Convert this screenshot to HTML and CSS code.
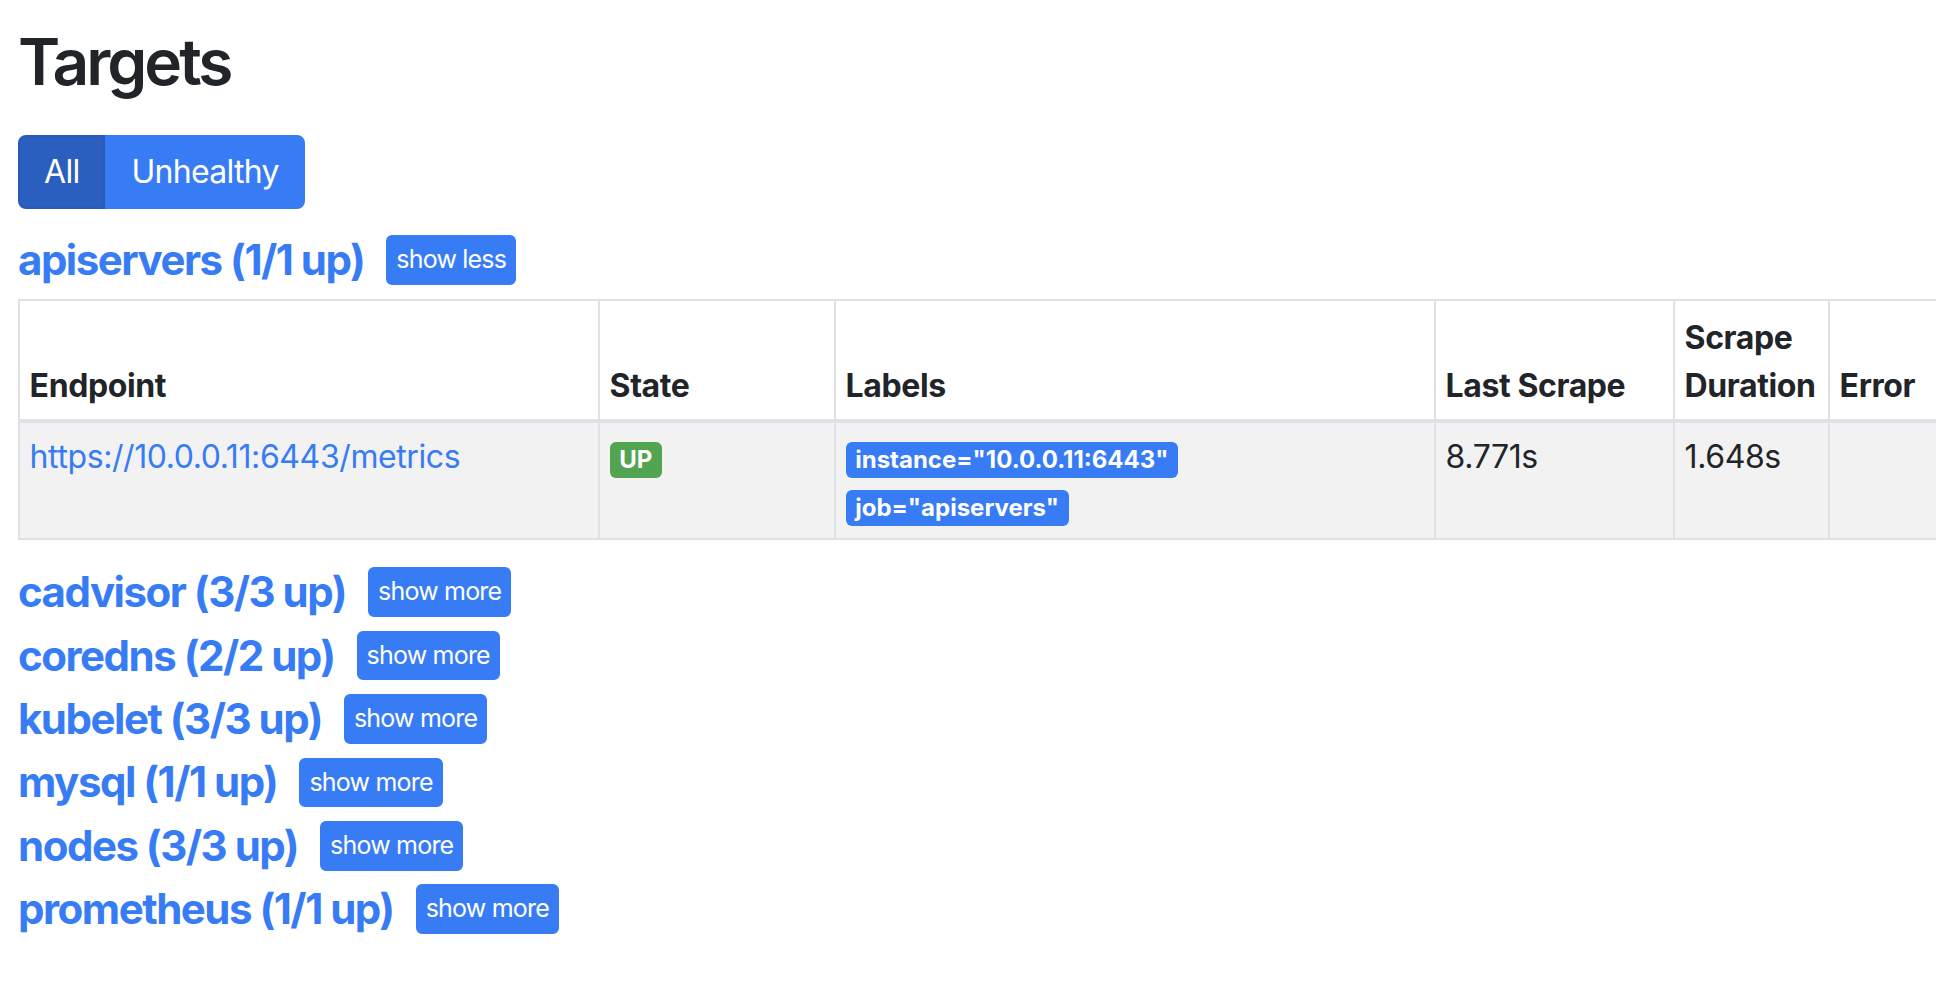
FILE: index.html
```html
<!DOCTYPE html>
<html lang="en">
<head>
    <meta charset="UTF-8">
    <meta name="viewport" content="width=device-width, initial-scale=1.0">
    <title>Targets</title>
    <link rel="stylesheet" href="styles.css">
</head>
<body>

<div class="page">
    <h2 class="title">Targets</h2>

    <div class="filters">
        <button class="btn btn-primary active">All</button>
        <button class="btn btn-primary">Unhealthy</button>
    </div>

    <div class="pool">
        <div class="pool-header">
            <h3><a href="#pool-apiservers">apiservers (1/1 up)</a></h3>
            <button class="btn btn-primary btn-xs">show less</button>
        </div>
        <table class="targets">
            <colgroup>
                <col class="col-endpoint">
                <col class="col-state">
                <col class="col-labels">
                <col class="col-last">
                <col class="col-duration">
                <col class="col-error">
            </colgroup>
            <thead>
                <tr>
                    <th>Endpoint</th>
                    <th>State</th>
                    <th>Labels</th>
                    <th>Last Scrape</th>
                    <th>Scrape Duration</th>
                    <th>Error</th>
                </tr>
            </thead>
            <tbody>
                <tr>
                    <td><a href="#metrics">https://10.0.0.11:6443/metrics</a></td>
                    <td><div><span class="badge badge-success">UP</span></div></td>
                    <td>
                        <div><span class="badge badge-primary">instance="10.0.0.11:6443"</span></div>
                        <div><span class="badge badge-primary">job="apiservers"</span></div>
                    </td>
                    <td>8.771s</td>
                    <td>1.648s</td>
                    <td></td>
                </tr>
            </tbody>
        </table>
    </div>

    <div class="pool">
        <div class="pool-header">
            <h3><a href="#pool-cadvisor">cadvisor (3/3 up)</a></h3>
            <button class="btn btn-primary btn-xs">show more</button>
        </div>
    </div>
    <div class="pool">
        <div class="pool-header">
            <h3><a href="#pool-coredns">coredns (2/2 up)</a></h3>
            <button class="btn btn-primary btn-xs">show more</button>
        </div>
    </div>
    <div class="pool">
        <div class="pool-header">
            <h3><a href="#pool-kubelet">kubelet (3/3 up)</a></h3>
            <button class="btn btn-primary btn-xs">show more</button>
        </div>
    </div>
    <div class="pool">
        <div class="pool-header">
            <h3><a href="#pool-mysql">mysql (1/1 up)</a></h3>
            <button class="btn btn-primary btn-xs">show more</button>
        </div>
    </div>
    <div class="pool">
        <div class="pool-header">
            <h3><a href="#pool-nodes">nodes (3/3 up)</a></h3>
            <button class="btn btn-primary btn-xs">show more</button>
        </div>
    </div>
    <div class="pool">
        <div class="pool-header">
            <h3><a href="#pool-prometheus">prometheus (1/1 up)</a></h3>
            <button class="btn btn-primary btn-xs">show more</button>
        </div>
    </div>
</div>

</body>
</html>
```

FILE: styles.css
```css
html, body {
    margin: 0;
    padding: 0;
    overflow: hidden;
}

body {
    font-family: Inter, "Liberation Sans", sans-serif;
    font-size: 32px;
    line-height: 1.5;
    letter-spacing: -0.4px;
    color: #212529;
    background-color: #fff;
}

a {
    color: #387cf5;
    text-decoration: none;
}

.page {
    padding: 24px 0 0 18px;
}

.title {
    font-size: 64px;
    font-weight: 600;
    line-height: 1.2;
    letter-spacing: -3px;
    margin: 0 0 34px;
}

.filters {
    display: flex;
    margin-bottom: 27px;
}

.btn {
    font-family: inherit;
    font-size: 32px;
    line-height: 48px;
    letter-spacing: -0.7px;
    padding: 11px 24px;
    border: 2px solid transparent;
    border-radius: 8px;
    color: #fff;
    cursor: pointer;
}

.btn-primary {
    background-color: #387cf5;
    border-color: #387cf5;
}

.btn-primary.active {
    background-color: #2a5fbf;
    border-color: #285bb8;
}

.filters .btn:first-child {
    border-top-right-radius: 0;
    border-bottom-right-radius: 0;
}

.filters .btn:last-child {
    border-top-left-radius: 0;
    border-bottom-left-radius: 0;
}

.pool-header {
    display: flex;
    align-items: center;
    height: 48px;
    margin-bottom: 15.4px;
}

.pool-header h3 {
    font-size: 42px;
    font-weight: 700;
    line-height: 48px;
    letter-spacing: -1.5px;
    margin: 0;
}

.btn-xs {
    font-size: 25px;
    line-height: 1.5;
    letter-spacing: -0.8px;
    padding: 4px 8px;
    border-radius: 6px;
    margin-left: 22px;
}

.targets {
    border-collapse: collapse;
    table-layout: fixed;
    width: 2050px;
    margin: 8px 0 28px;
}

.col-endpoint { width: 580px; }
.col-state { width: 236px; }
.col-labels { width: 600px; }
.col-last { width: 239px; }
.col-duration { width: 155px; }
.col-error { width: 240px; }

.targets th,
.targets td {
    border: 2px solid #dee2e6;
    padding: 10px 9.6px 9px;
    text-align: left;
    vertical-align: top;
}

.targets th {
    font-weight: 700;
    vertical-align: bottom;
    border-bottom-width: 4px;
    padding-top: 13px;
    padding-bottom: 9px;
}

.targets tbody tr {
    background-color: #f2f2f2;
}

.badge {
    display: inline-block;
    padding: 6px 9.6px;
    font-size: 24px;
    font-weight: 700;
    line-height: 1;
    letter-spacing: 0;
    border-radius: 6px;
    color: #fff;
}

.badge-primary {
    background-color: #387cf5;
}

.badge-success {
    background-color: #52a451;
}
```
